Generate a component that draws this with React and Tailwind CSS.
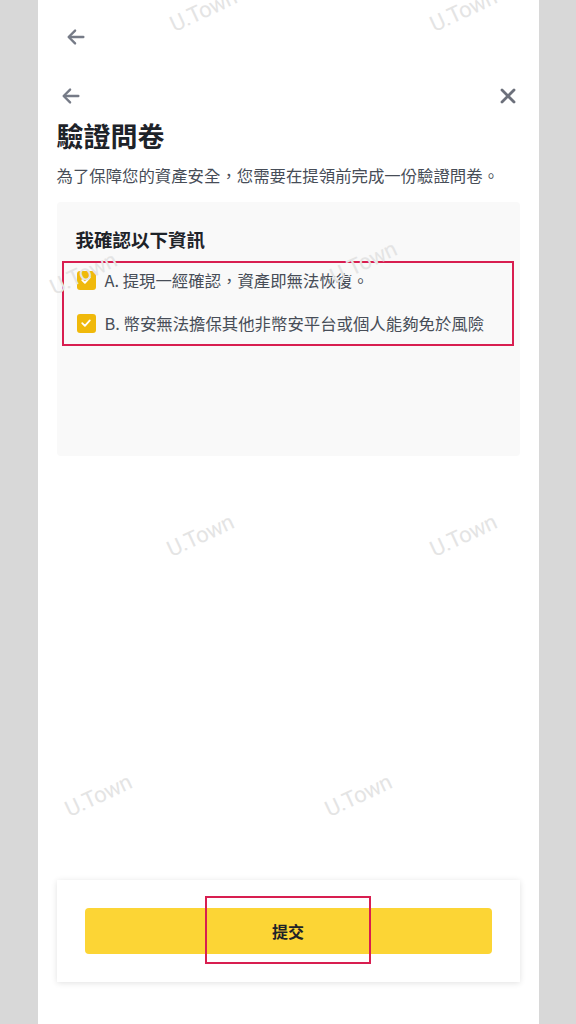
import React from "react";

const font = { fontFamily: '"Noto Sans CJK TC", "Noto Sans", sans-serif' };

function Check() {
  return (
    <div className="w-[19px] h-[19px] rounded-[3px] bg-[#f0b90b] flex items-center justify-center shrink-0">
      <svg width="12" height="12" viewBox="0 0 12 12" fill="none">
        <path d="M2.2 6.2 L4.9 8.8 L9.8 3.4" stroke="white" strokeWidth="1.8" strokeLinecap="round" strokeLinejoin="round" />
      </svg>
    </div>
  );
}

function Arrow({ size = 22 }) {
  return (
    <svg width={size} height={size} viewBox="0 0 24 24" fill="none" stroke="#767b87" strokeWidth="2.6" strokeLinecap="round" strokeLinejoin="round">
      <path d="M20 12 H4.5" />
      <path d="M11 5 L4 12 L11 19" />
    </svg>
  );
}

const marks = [
  [200, 10], [460, 10],
  [80, 273], [360, 262],
  [197, 535], [460, 535],
  [95, 795], [355, 795],
];

export default function App() {
  return (
    <div className="relative min-h-[1024px] bg-[#d8d8d8] flex justify-center overflow-hidden" style={font}>
      <div className="w-[501px] min-h-[1024px] bg-white flex flex-col">
        <div className="h-[74px] flex items-center pl-[27px]">
          <Arrow size={22} />
        </div>
        <div className="h-[44px] flex items-center justify-between pl-[22px] pr-[22px]">
          <Arrow size={22} />
          <svg width="18" height="18" viewBox="0 0 18 18" fill="none" stroke="#6c707b" strokeWidth="2.8" strokeLinecap="round">
            <path d="M3 3 L15 15" />
            <path d="M15 3 L3 15" />
          </svg>
        </div>
        <div className="px-[19px]">
          <h1 className="text-[27px] leading-[36px] font-bold text-[#1e2329]">驗證問卷</h1>
          <p className="mt-[9px] text-[16.4px] leading-[24px] text-[#474d57] whitespace-nowrap">
            為了保障您的資產安全，您需要在提領前完成一份驗證問卷。
          </p>
          <div className="mt-[15px] h-[254px] bg-[#f9f9f9] rounded-[4px] flex flex-col">
            <div className="pt-[24px] pl-[19px] text-[18.5px] leading-[26px] font-bold text-[#1e2329]">我確認以下資訊</div>
            <div className="mt-[9px] ml-[5px] mr-[6px] border-2 border-[#d81e50] pb-[4px] flex flex-col gap-[9px]">
              <div className="h-[34px] flex items-center pl-[13px] gap-[9px]">
                <Check />
                <span className="text-[16.4px] text-[#474d57] whitespace-nowrap">A. 提現一經確認，資產即無法恢復。</span>
              </div>
              <div className="h-[34px] flex items-center pl-[13px] gap-[9px]">
                <Check />
                <span className="text-[16.4px] text-[#474d57] whitespace-nowrap">B. 幣安無法擔保其他非幣安平台或個人能夠免於風險</span>
              </div>
            </div>
          </div>
        </div>
        <div className="flex-1" />
        <div className="mx-[19px] mb-[42px] h-[102px] bg-white shadow-[0_1px_6px_rgba(0,0,0,0.12)] relative px-[28px] flex items-center">
          <button className="w-full h-[46px] rounded-[4px] bg-[#fcd535] text-[16px] font-bold text-[#1e2329]">提交</button>
          <div className="absolute left-[148px] top-[16px] w-[166px] h-[68px] border-2 border-[#d81e50] pointer-events-none" />
        </div>
      </div>
      {marks.map(([x, y], i) => (
        <div
          key={i}
          className="absolute pointer-events-none text-[22px] text-[#e4e4e4] -rotate-[25deg] whitespace-nowrap tracking-[-0.5px]"
          style={{ left: x - 32, top: y - 16, fontFamily: 'Roboto, sans-serif' }}
        >
          U.Town
        </div>
      ))}
    </div>
  );
}
